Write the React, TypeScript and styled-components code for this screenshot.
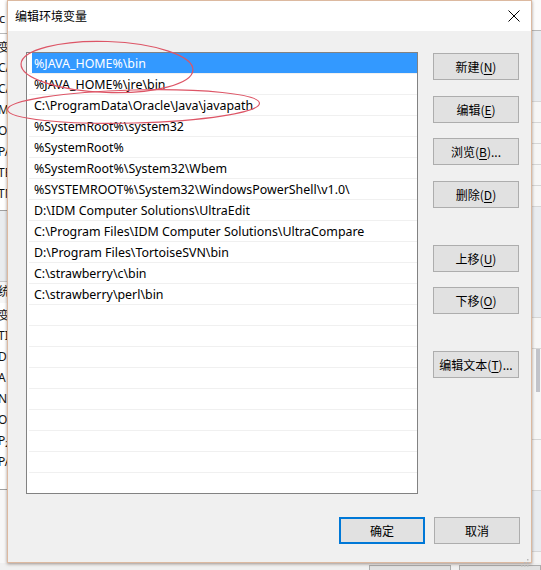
import React from "react";
import styled, { createGlobalStyle } from "styled-components";

const Global = createGlobalStyle`
  html, body { margin: 0; padding: 0; background: #f0f0f0; }
  body { font-family: "Noto Sans", "Noto Sans CJK SC", sans-serif; }
`;

const Desktop = styled.div`
  position: relative;
  width: 541px;
  height: 570px;
  overflow: hidden;
  background: #eef0f2;
`;

/* background window behind the dialog */
const BackWindow = styled.div`
  position: absolute;
  inset: 0;
  background: #f0f0f0;
`;

const BackLeftList = styled.div`
  position: absolute;
  left: 0;
  top: 0;
  width: 8px;
  height: 563px;
  background: #f7f7f7;
  overflow: hidden;
  display: flex;
  flex-direction: column;
`;

const BackTitle = styled.div`
  height: 33px;
  background: #ffffff;
  border-bottom: 1px solid #b9b9b9;
  font: 13px "Noto Sans", sans-serif;
  line-height: 36px;
  margin-left: -1px;
  color: #222;
`;

const BackList = styled.div<{ $h: number }>`
  height: ${(p) => p.$h}px;
  background: #ffffff;
  border-bottom: 1px solid #a0a0a0;
  display: flex;
  flex-direction: column;
`;

const BackGap = styled.div<{ $h: number }>`
  height: ${(p) => p.$h}px;
  background: #e9ecef;
  border-bottom: 1px solid #c8c8c8;
`;

const BackItem = styled.div`
  height: 21px;
  line-height: 21px;
  font: 12px "Noto Sans", "Noto Sans CJK SC", sans-serif;
  white-space: nowrap;
  margin-left: -2px;
  color: #111;
`;

const BackRight = styled.div`
  position: absolute;
  left: 532px;
  top: 0;
  width: 9px;
  height: 563px;
  background: #f4f4f4;
  display: flex;
  flex-direction: column;
`;

const BackRightTop = styled.div`
  height: 30px;
  background: #fbfbfb;
  border-bottom: 1px solid #b8b8b8;
`;

const BackRightRow = styled.div<{ $h: number; $bg?: string }>`
  height: ${(p) => p.$h}px;
  background: ${(p) => p.$bg || "#f6f6f6"};
  border-bottom: 1px solid #d6d6d6;
  display: flex;
  justify-content: flex-end;
`;

const BackThumb = styled.div`
  width: 4px;
  margin-right: 1px;
  height: 43px;
  background: #c2c3c9;
`;

const BackBottom = styled.div`
  position: absolute;
  left: 0;
  top: 563px;
  width: 541px;
  height: 7px;
  display: flex;
  align-items: flex-start;
`;

const BackBtn = styled.div<{ $w: number; $ml: number }>`
  margin-left: ${(p) => p.$ml}px;
  margin-top: 2px;
  width: ${(p) => p.$w}px;
  height: 10px;
  background: #e1e1e1;
  border: 1px solid #adadad;
`;

/* dialog */
const Dialog = styled.div`
  position: absolute;
  left: 7px;
  top: 0;
  width: 523px;
  height: 561px;
  border: 1px solid #dcb9a0;
  background: #f0f0f0;
  box-shadow: 0 1px 3px rgba(90, 70, 60, 0.55);
  display: flex;
  flex-direction: column;
`;

const TitleBar = styled.div`
  height: 30px;
  background: #ffffff;
  display: flex;
  align-items: center;
  justify-content: space-between;
  padding: 0 8px 0 7px;
  flex-shrink: 0;
`;

const Title = styled.div`
  font: 12px "Noto Sans CJK SC", sans-serif;
  color: #000;
  line-height: 30px;
`;

const CloseBtn = styled.div`
  width: 22px;
  height: 22px;
  display: flex;
  align-items: center;
  justify-content: center;
  margin-right: -2px;
`;

const Body = styled.div`
  flex: 1;
  display: flex;
  flex-direction: column;
  padding: 21px 11px 0 18px;
  position: relative;
`;

const MainRow = styled.div`
  display: flex;
  gap: 15px;
`;

const ListBox = styled.div`
  width: 390px;
  height: 440px;
  border: 1px solid #828282;
  background: #ffffff;
  overflow: hidden;
  display: flex;
  flex-direction: column;
`;

const Row = styled.div<{ $selected?: boolean }>`
  box-sizing: border-box;
  height: 21px;
  flex-shrink: 0;
  margin-left: 2px;
  border-bottom: 1px solid #f0f0f0;
  padding: 2px 0 0 5px;
  font: 12.4px "Noto Sans", "Noto Sans CJK SC", sans-serif;
  line-height: 18px;
  white-space: nowrap;
  color: ${(p) => (p.$selected ? "#ffffff" : "#000000")};
  background: ${(p) =>
    p.$selected
      ? "linear-gradient(to right, transparent 3px, #3399ff 3px)"
      : "transparent"};
`;

const ButtonCol = styled.div`
  display: flex;
  flex-direction: column;
  padding-top: 1px;
`;

const Button = styled.button<{ $mt?: number; $default?: boolean }>`
  margin-top: ${(p) => p.$mt || 0}px;
  width: 86px;
  height: 27px;
  box-sizing: border-box;
  background: #e1e1e1;
  border: ${(p) => (p.$default ? "2px solid #0078d7" : "1px solid #adadad")};
  padding: 0;
  font: 12px "Noto Sans CJK SC", sans-serif;
  color: #000;
  display: flex;
  align-items: center;
  justify-content: center;
  cursor: default;
  u { text-decoration: underline; text-underline-offset: 2px; }
`;

const Footer = styled.div`
  display: flex;
  justify-content: flex-end;
  gap: 9px;
  margin-top: 23px;
`;

const Grip = styled.div`
  position: absolute;
  right: 2px;
  bottom: 2px;
  width: 10px;
  height: 10px;
`;

const Overlay = styled.svg`
  position: absolute;
  left: 0;
  top: 0;
  width: 541px;
  height: 570px;
  pointer-events: none;
`;

const entries = [
  "%JAVA_HOME%\\bin",
  "%JAVA_HOME%\\jre\\bin",
  "C:\\ProgramData\\Oracle\\Java\\javapath",
  "%SystemRoot%\\system32",
  "%SystemRoot%",
  "%SystemRoot%\\System32\\Wbem",
  "%SYSTEMROOT%\\System32\\WindowsPowerShell\\v1.0\\",
  "D:\\IDM Computer Solutions\\UltraEdit",
  "C:\\Program Files\\IDM Computer Solutions\\UltraCompare",
  "D:\\Program Files\\TortoiseSVN\\bin",
  "C:\\strawberry\\c\\bin",
  "C:\\strawberry\\perl\\bin",
];

const TOTAL_ROWS = 21;

const backTop = ["变", "CA", "CA", "M", "O", "PA", "TE", "TM"];
const backBottom = ["变", "TI", "D", "A", "N", "O", "P₂", "PA"];

export default function App() {
  const rows = Array.from({ length: TOTAL_ROWS }, (_, i) => entries[i] ?? "");
  return (
    <Desktop>
      <Global />
      <BackWindow>
        <BackLeftList>
          <BackTitle>c</BackTitle>
          <BackList $h={176}>
            <div style={{ height: 4 }} />
            {backTop.map((t, i) => (
              <BackItem key={i}>{t}</BackItem>
            ))}
          </BackList>
          <BackGap $h={70} />
          <BackItem>统</BackItem>
          <BackList $h={186}>
            <div style={{ height: 3 }} />
            {backBottom.map((t, i) => (
              <BackItem key={i}>{t}</BackItem>
            ))}
          </BackList>
        </BackLeftList>
        <BackRight>
          <BackRightTop />
          <BackRightRow $h={70} $bg="#e9ecf0" />
          <BackRightRow $h={20} />
          <BackRightRow $h={20} />
          <BackRightRow $h={20} />
          <BackRightRow $h={20} />
          <BackRightRow $h={20} />
          <BackRightRow $h={110} $bg="#e9ecf0" />
          <BackRightRow $h={30} />
          <BackRightRow $h={90}>
            <BackThumb />
          </BackRightRow>
          <BackRightRow $h={50} />
          <BackRightRow $h={60} $bg="#e9ecf0" />
        </BackRight>
        <BackBottom>
          <BackBtn $ml={369} $w={85} />
          <BackBtn $ml={8} $w={85} />
        </BackBottom>
      </BackWindow>

      <Dialog>
        <TitleBar>
          <Title>编辑环境变量</Title>
          <CloseBtn>
            <svg width="12" height="12" viewBox="0 0 12 12">
              <path d="M0.5 0.5 L11.5 11.5 M11.5 0.5 L0.5 11.5" stroke="#000" strokeWidth="1" />
            </svg>
          </CloseBtn>
        </TitleBar>
        <Body>
          <MainRow>
            <ListBox>
              {rows.map((r, i) => (
                <Row key={i} $selected={i === 0}>
                  {r}
                </Row>
              ))}
            </ListBox>
            <ButtonCol>
              <Button>新建(<u>N</u>)</Button>
              <Button $mt={16}>编辑(<u>E</u>)</Button>
              <Button $mt={15}>浏览(<u>B</u>)...</Button>
              <Button $mt={16}>删除(<u>D</u>)</Button>
              <Button $mt={37}>上移(<u>U</u>)</Button>
              <Button $mt={15}>下移(<u>O</u>)</Button>
              <Button $mt={37}>编辑文本(<u>T</u>)...</Button>
            </ButtonCol>
          </MainRow>
          <Footer>
            <Button $default>确定</Button>
            <Button>取消</Button>
          </Footer>
          <Grip>
            <svg width="10" height="10" viewBox="0 0 10 10">
              {[
                [8, 2],
                [5, 5],
                [8, 5],
                [2, 8],
                [5, 8],
                [8, 8],
              ].map(([x, y], i) => (
                <rect key={i} x={x} y={y} width="1.5" height="1.5" fill="#b8b8b8" />
              ))}
            </svg>
          </Grip>
        </Body>
      </Dialog>

      <Overlay viewBox="0 0 541 570">
        <ellipse
          cx="107"
          cy="67"
          rx="86"
          ry="25.5"
          fill="none"
          stroke="#dd5566"
          strokeWidth="1.2"
          transform="rotate(2 107 67)"
        />
        <ellipse
          cx="133.5"
          cy="106.5"
          rx="126"
          ry="16.5"
          fill="none"
          stroke="#dd5566"
          strokeWidth="1.2"
          transform="rotate(-1.5 133.5 106.5)"
        />
      </Overlay>
    </Desktop>
  );
}
